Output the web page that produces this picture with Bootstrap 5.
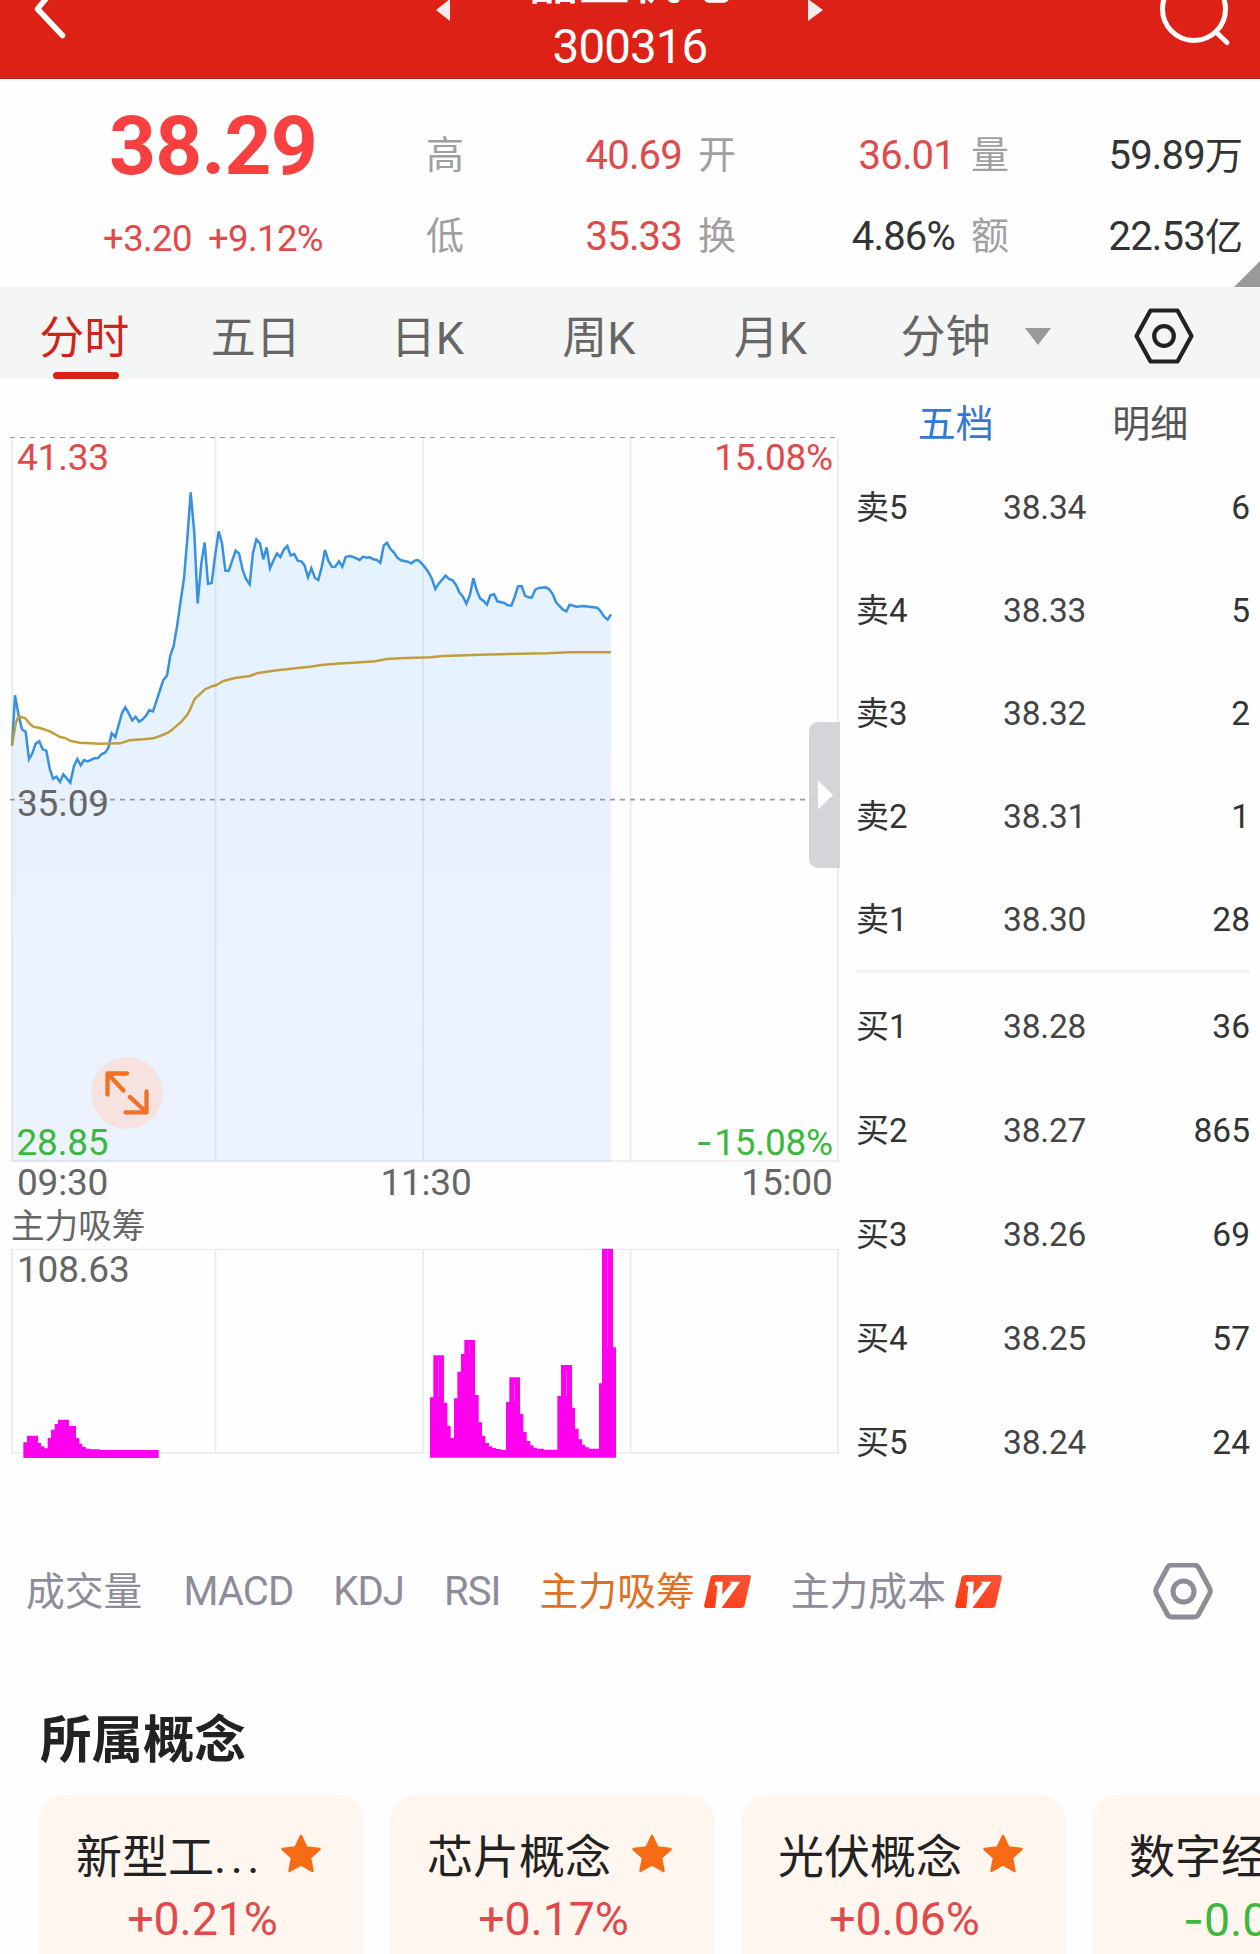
<!DOCTYPE html>
<html lang="zh-CN">
<head>
<meta charset="utf-8">
<meta name="viewport" content="width=device-width, initial-scale=1">
<title>300316</title>
<link href="https://cdn.jsdelivr.net/npm/bootstrap@5.3.0/dist/css/bootstrap.min.css" rel="stylesheet">
<script src="https://cdn.jsdelivr.net/npm/bootstrap@5.3.0/dist/js/bootstrap.bundle.min.js"></script>
<style>
  html, body { height: 1954px; overflow: hidden; }
  body { font-family: Roboto, "Noto Sans CJK SC", sans-serif; background: #fefefe; color: #333; white-space: nowrap; }
  svg { display: block; flex: none; }
  .up { color: #e04a4a; }
  .down { color: #3cb83c; }
  .dash { font-family: Inter, sans-serif; }
  .topbar { height: 79px; background: #de2116; color: #fff; border-bottom: 1px solid #b8271f; }
  .topbar-side { width: 430px; height: 79px; }
  .title-box { width: 340px; }
  .stock-name { font-size: 51px; line-height: 50px; margin-top: -43px; font-weight: 500; }
  .stock-code { font-size: 47.5px; line-height: 56px; margin-top: 12px; letter-spacing: -.9px; }
  .quote { height: 208px; }
  .last-box { width: 426px; padding-top: 26px; }
  .last-price { font-size: 82px; line-height: 82px; font-weight: 700; color: #f84040; letter-spacing: -.8px; }
  .last-change { font-size: 36.5px; line-height: 40px; margin-top: 32px; gap: 16px; letter-spacing: -.6px; }
  .stats { padding: 36px 17px 0 0; }
  .stat-row { height: 81px; font-size: 40px; line-height: 81px; letter-spacing: -.8px; }
  .stat-row b { font-weight: 400; color: #a0a0a0; font-size: 38px; letter-spacing: 0; }
  .stat-row .zh { font-size: 38px; letter-spacing: 0; }
  .stat-a { width: 256px; } .stat-b { width: 273px; padding-left: 16px; } .stat-c { padding-left: 16px; }
  .corner { right: 0; bottom: 0; }
  .periods { height: 92px; background: #f4f6f5; font-size: 45px; line-height: 104px; color: #666; }
  .period { width: 171.5px; padding-right: 3px; }
  .period.on { color: #cf2519; }
  .period.on::after { content: ""; position: absolute; left: 53px; bottom: 0; width: 66px; height: 7px; border-radius: 4px; background: #d8231a; }
  .period-more { padding: 0 66px 0 43px; height: 98px; }
  .period-more > div { gap: 34px; }
  .board { height: 1101px; }
  .book { width: 420px; padding: 0 10px 0 16px; color: #333; }
  .book-tabs { height: 75.5px; font-size: 38px; line-height: 90px; color: #555; }
  .book-tabs div { width: 200px; }
  .book-tabs div + div { margin-left: -5px; }
  .book-tabs .on { color: #3478d4; }
  .level { font-size: 33.5px; height: 103.2px; line-height: 105px; }
  .level .side { width: 147px; font-size: 33px; }
  .level .px { width: 120px; color: #444; letter-spacing: -.2px; }
  .bids .level { height: 104px; line-height: 108px; }
  .asks { border-bottom: 3px solid #f3f3f4; }
  .inds { height: 224px; padding: 0 47px 0 26px; font-size: 38.8px; line-height: 228px; color: #8e8c99; }
  .inds .lat { font-size: 40px; letter-spacing: -.9px; }
  .inds .on { color: #e0701f; }
  .block-title { height: 91px; padding-left: 40px; font-size: 51.5px; line-height: 73px; font-weight: 700; color: #222; margin: 0; }
  .concepts { padding-left: 39px; gap: 26px; height: 159px; overflow: hidden; }
  .concept { flex: none; width: 325px; height: 200px; border-radius: 27px; background: #fff6f0; padding: 27px 43px 0 37px; }
  .concept-name { font-size: 46px; line-height: 70px; color: #222; }
  .concept-name svg { margin-top: -7px; }
  .dots { letter-spacing: 4.5px; }
  .concept-pct { font-size: 46.5px; line-height: 54px; letter-spacing: -.1px; margin-left: 8px; }
</style>
</head>
<body>
<header class="topbar d-flex justify-content-between">
  <div class="topbar-side">
    <svg width="100" height="79" fill="none" stroke="#fff" stroke-width="5.5" stroke-linecap="round" stroke-linejoin="round"><path d="M53 -10 37.500 9 62.500 35.500"/></svg>
  </div>
  <div class="d-flex">
    <svg width="30" height="79"><path d="M20-1V21L6 10Z" fill="#f3ecec"/></svg>
    <div class="title-box text-center"><div class="stock-name">晶盛机电</div><div class="stock-code">300316</div></div>
    <svg width="30" height="79"><path d="M8-1V21L23 10Z" fill="#f3ecec"/></svg>
  </div>
  <div class="topbar-side d-flex justify-content-end">
    <svg width="110" height="79" fill="none" stroke="#fff" stroke-width="5" stroke-linecap="round"><circle cx="44" cy="9" r="31.500"/><path d="M66 32 77 42.500"/></svg>
  </div>
</header>

<section class="quote d-flex position-relative">
  <div class="last-box text-center">
    <div class="last-price">38.29</div>
    <div class="last-change d-flex justify-content-center up"><span>+3.20</span><span>+9.12%</span></div>
  </div>
  <div class="stats flex-grow-1">
    <div class="stat-row d-flex">
      <div class="stat-a d-flex justify-content-between"><b>高</b><span class="up">40.69</span></div>
      <div class="stat-b d-flex justify-content-between"><b>开</b><span class="up">36.01</span></div>
      <div class="stat-c flex-grow-1 d-flex justify-content-between"><b>量</b><span>59.89<span class="zh">万</span></span></div>
    </div>
    <div class="stat-row d-flex">
      <div class="stat-a d-flex justify-content-between"><b>低</b><span class="up">35.33</span></div>
      <div class="stat-b d-flex justify-content-between"><b>换</b><span>4.86%</span></div>
      <div class="stat-c flex-grow-1 d-flex justify-content-between"><b>额</b><span>22.53<span class="zh">亿</span></span></div>
    </div>
  </div>
  <svg class="corner position-absolute" width="26" height="26"><path d="M26 0V26H0Z" fill="#999"/></svg>
</section>

<nav class="periods d-flex position-relative">
  <div class="period on text-center">分时</div>
  <div class="period text-center">五日</div>
  <div class="period text-center">日K</div>
  <div class="period text-center">周K</div>
  <div class="period text-center">月K</div>
  <div class="period-more d-flex align-items-center flex-grow-1 justify-content-between">
    <div class="d-flex align-items-center"><span class="pt-1">分钟</span><svg width="26" height="17"><path d="M0 0H26L13 17Z" fill="#999"/></svg></div>
    <svg width="60" height="56" viewBox="0 0 60 56" fill="none" stroke="#222" stroke-width="4.200" stroke-linejoin="round"><path d="M16.500 2.500H43.500L57.500 28 43.500 53.500H16.500L2.500 28Z"/><circle cx="30" cy="28" r="9.800"/></svg>
  </div>
</nav>

<main class="board d-flex">
  <svg id="chart" width="840" height="1101" viewBox="0 379 840 1101" font-size="37" letter-spacing="-.2">
    <defs><linearGradient id="sky" x1="0" y1="0" x2="0" y2="1"><stop offset="0" stop-color="#e4f3fe"/><stop offset=".4" stop-color="#e7f2fe"/><stop offset="1" stop-color="#ecf3ff"/></linearGradient></defs>
    <g transform="translate(0 460) scale(.333333)">
      <path id="area" fill="url(#sky)"/>
      <path id="price" fill="none" stroke="#3790e0" stroke-width="7.500"/>
      <path id="avg" fill="none" stroke="#c29d3c" stroke-width="7.500" stroke-linejoin="round"/>
    </g>
    <g stroke="#8a90a0" stroke-opacity=".17" stroke-width="1.700" fill="none">
      <path d="M12 438V1161M215.500 438V1161M423 438V1161M630.500 438V1161M838 438V1161M10 1161H840"/>
      <path d="M12 1249V1453M215.500 1249V1453M423 1249V1453M630.500 1249V1453M838 1249V1453M10 1249.500H840M10 1453H840"/>
    </g>
    <g stroke="#999" fill="none"><path d="M10 437.500H838" stroke-dasharray="5 5" stroke-width="1.200"/><path d="M10 799.700H838" stroke-dasharray="5 5" stroke-width="1.800"/></g>
    <g fill="#f0e">
      <path transform="translate(400 1140) scale(.333333)" d="M90 953V772H100V646H132V788H142V858H152V894H162V775H172V695H183V642H193V600H225V765H236V847H246V888H256V909H267V919H277V924H288V927H304V930H318V786H328V712H360V822H370V876H380V903H391V916H401V923H411V926H432V929H472V768H483V675H516V803H525V866H536V898H546V914H556V922H567V926H597V730H606V326H639V622H648V953Z"/>
      <path transform="translate(0 1020) scale(.333333)" d="M70 1314V1267H81V1247H114V1269H123V1279H133V1285H143V1254H153V1229H164V1212H174V1199H207V1218H228V1254H238V1271H247V1281H258V1286H270V1288H300V1290H476V1314Z"/>
    </g>
    <path d="M438.500 1360V1397M469.500 1345V1354M514.500 1382V1402M566.500 1371V1396M607.500 1250V1347" stroke="#ff5cf5" stroke-width=".8"/>
    <g class="up" fill="currentColor"><text x="17" y="470">41.33</text><text x="833" y="470" text-anchor="end">15.08%</text></g>
    <g class="down" fill="currentColor"><text x="16.500" y="1155">28.85</text><text x="833" y="1155" text-anchor="end"><tspan class="dash" letter-spacing="1.500">-</tspan>15.08%</text></g>
    <g fill="#666"><text x="17" y="816">35.09</text><text x="17" y="1195">09:30</text><text x="426" y="1195" text-anchor="middle">11:30</text><text x="832.500" y="1195" text-anchor="end">15:00</text><text x="11" y="1238" font-size="33.600" letter-spacing="0">主力吸筹</text><text x="17" y="1282">108.63</text></g>
    <circle cx="127" cy="1093" r="36" fill="#f6e2df"/>
    <path d="M107.500 1094.500V1073.500H127M109 1075 123.500 1090.500M146.500 1091.500V1112.300H125.500M130 1097 144.500 1110.500" fill="none" stroke="#ee7125" stroke-width="4.300" stroke-linecap="round" stroke-linejoin="round"/>
    <path d="M840 722V868H818a9 9 0 0 1-9-9V731a9 9 0 0 1 9-9Z" fill="#d2d1d6" fill-opacity=".93"/>
    <path d="M818 780.500V809.500L833 795Z" fill="#fff"/>
  </svg>
  <aside class="book">
    <div class="book-tabs d-flex text-center"><div class="on">五档</div><div>明细</div></div>
    <div class="asks" id="asks"></div>
    <div class="bids" id="bids"></div>
  </aside>
</main>

<nav class="inds d-flex align-items-center justify-content-between">
  <div class="d-flex align-items-center">
    <span>成交量</span>
    <span class="lat" style="margin-left:41px">MACD</span>
    <span class="lat" style="margin-left:40px">KDJ</span>
    <span class="lat" style="margin-left:40px">RSI</span>
    <span class="on" style="margin-left:39px">主力吸筹</span>
    <svg style="margin-left:9px" width="47" height="34" viewBox="0 0 47 34"><use href="#vip"/></svg>
    <span style="margin-left:40px">主力成本</span>
    <svg style="margin-left:9px" width="47" height="34" viewBox="0 0 47 34"><use href="#vip"/></svg>
  </div>
  <svg width="60" height="58" viewBox="0 1 60 58" fill="none" stroke="#8e8c99" stroke-width="5" stroke-linejoin="round"><path d="M19 3H41Q44 3 45.500 5.500L56.500 26Q58 29 56.500 32L45.500 52.500Q44 55 41 55H19Q16 55 14.500 52.500L3.500 32Q2 29 3.500 26L14.500 5.500Q16 3 19 3Z"/><circle cx="30.500" cy="29.500" r="10.500"/></svg>
</nav>

<h2 class="block-title">所属概念</h2>
<section class="concepts d-flex" id="concepts"></section>

<svg width="0" height="0" class="position-absolute">
  <defs>
    <linearGradient id="hot" x1="0" y1="1" x2="1" y2="0"><stop offset="0" stop-color="#ff3a12"/><stop offset="1" stop-color="#f8553a"/></linearGradient>
    <symbol id="vip" viewBox="0 0 47 34"><path d="M10.500 0H44.500Q47.500 0 46.800 3L40.500 30.500Q39.800 33 37 33H2.500Q-.5 33 .2 30L6.500 2.500Q7.200 0 10.500 0Z" fill="url(#hot)"/><path d="M11.500 6.700H18.700L18.200 19.500 27.500 8.500 25.500 6.700H36.300L17.500 33H11.300L13.300 11.500 10.700 9.500Z" fill="#fff"/></symbol>
    <symbol id="star" viewBox="0 0 40 39"><path d="M20 2 25.500 13.500 38.500 15 29 23.800 31.500 37 20 30.500 8.500 37 11 23.800 1.500 15 14.500 13.500Z" fill="#f76b14" stroke="#f76b14" stroke-width="2.500" stroke-linejoin="round"/></symbol>
  </defs>
</svg>
<script>
  // Chart points, in thirds of a pixel: x, y pairs
  const price = `36,857 45,706 56,766 66,808 77,815 87,898 97,880 107,851 118,844 128,868 139,872 149,925 159,956 169,950 180,965 190,943 211,968 222,918 232,897 242,916 252,900 263,904 283,895 294,894 304,883 315,878 325,864 335,820 346,831 356,795 366,759 376,742 386,760 397,781 407,770 417,785 428,778 438,767 448,750 459,754 469,724 480,690 490,660 501,647 511,587 521,558 531,500 541,430 552,355 562,235 572,97 583,220 593,430 604,310 614,247 624,371 635,369 645,290 656,214 666,250 676,332 686,333 707,272 717,280 728,330 738,357 749,373 759,278 769,238 780,250 790,298 800,262 810,325 821,300 831,280 841,291 852,268 862,258 872,286 883,282 893,302 904,304 914,317 924,352 934,325 945,354 955,360 965,322 975,270 985,302 996,321 1006,320 1017,304 1027,320 1037,291 1048,288 1058,290 1079,300 1089,290 1100,293 1110,292 1120,298 1131,300 1141,308 1151,257 1161,248 1172,268 1182,278 1192,293 1203,301 1223,305 1234,310 1244,302 1254,300 1265,310 1275,322 1286,338 1296,357 1306,387 1316,371 1337,347 1347,357 1358,361 1368,375 1378,397 1389,410 1399,431 1410,404 1420,355 1430,390 1440,415 1450,422 1461,434 1471,406 1482,403 1492,424 1513,429 1523,436 1534,437 1544,411 1554,379 1565,378 1575,407 1585,412 1595,413 1606,389 1616,384 1637,382 1647,387 1658,402 1668,426 1678,438 1689,449 1699,454 1709,434 1730,440 1750,438 1792,443 1802,454 1812,469 1823,479 1833,463`;
  const avg = `36,857 47,790 56,768 77,776 90,792 100,800 120,804 150,814 180,831 195,834 212,843 240,848 300,851 360,850 388,841 430,838 460,835 480,828 504,818 520,806 545,784 562,764 572,745 584,717 615,688 635,679 648,676 670,663 705,654 750,648 770,640 820,632 860,628 900,623 930,620 970,614 1030,610 1060,608 1125,604 1160,597 1200,595 1290,592 1330,588 1400,586 1440,584 1560,581 1640,580 1710,577 1833,577`;
  const toPath = s => 'M' + s.replace(/ /g, 'L');
  document.getElementById('price').setAttribute('d', toPath(price));
  document.getElementById('area').setAttribute('d', toPath(price) + 'L1833,2106L36,2106Z');
  document.getElementById('avg').setAttribute('d', toPath(avg));

  const row = ([s, p, q]) => `<div class="level d-flex"><div class="side">${s}</div><div class="px">${p}</div><div class="flex-grow-1 text-end">${q}</div></div>`;
  document.getElementById('asks').innerHTML = [['卖5','38.34',6],['卖4','38.33',5],['卖3','38.32',2],['卖2','38.31',1],['卖1','38.30',28]].map(row).join('');
  document.getElementById('bids').innerHTML = [['买1','38.28',36],['买2','38.27',865],['买3','38.26',69],['买4','38.25',57],['买5','38.24',24]].map(row).join('');

  document.getElementById('concepts').innerHTML = [['新型工<span class="dots">...</span>','+0.21%'],['芯片概念','+0.17%'],['光伏概念','+0.06%'],['数字经济','<span class="dash">-</span>0.05%']].map(([n, p]) =>
    `<div class="concept"><div class="concept-name d-flex align-items-center justify-content-between"><span>${n}</span><svg width="40" height="39"><use href="#star"/></svg></div><div class="concept-pct text-center ${p[0] === '+' ? 'up' : 'down'}">${p}</div></div>`).join('');
</script>
</body>
</html>
